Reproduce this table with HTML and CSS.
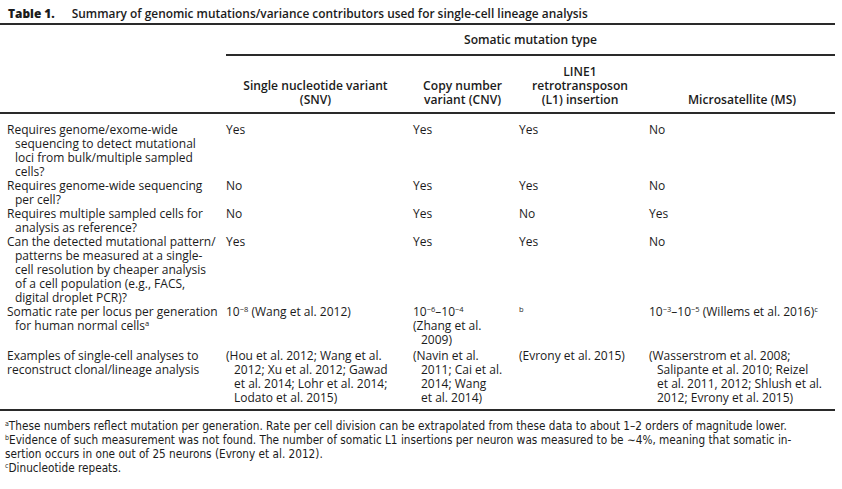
FILE: index.html
```html
<!DOCTYPE html>
<html lang="en">
<head>
<meta charset="utf-8">
<title>Table 1</title>
<link rel="stylesheet" href="styles.css">
</head>
<body>
<div class="page">
  <div class="title"><span class="tnum">Table 1.</span><span class="tcap">Summary of genomic mutations/variance contributors used for single-cell lineage analysis</span></div>
  <table class="tbl">
    <colgroup>
      <col class="c1"><col class="c2"><col class="c3"><col class="c4"><col class="c5">
    </colgroup>
    <thead>
      <tr class="r1">
        <th></th>
        <th colspan="4" class="span">Somatic mutation type</th>
      </tr>
      <tr class="r2">
        <th></th>
        <th class="h2">Single nucleotide variant<br>(SNV)</th>
        <th class="h3">Copy number<br>variant (CNV)</th>
        <th class="h4">LINE1<br>retrotransposon<br>(L1) insertion</th>
        <th class="h5">Microsatellite (MS)</th>
      </tr>
    </thead>
    <tbody>
      <tr class="first">
        <td class="lab">Requires genome/exome-wide<br>sequencing to detect mutational<br>loci from bulk/multiple sampled<br>cells?</td>
        <td>Yes</td><td>Yes</td><td>Yes</td><td>No</td>
      </tr>
      <tr>
        <td class="lab">Requires genome-wide sequencing<br>per cell?</td>
        <td>No</td><td>Yes</td><td>Yes</td><td>No</td>
      </tr>
      <tr>
        <td class="lab">Requires multiple sampled cells for<br>analysis as reference?</td>
        <td>No</td><td>Yes</td><td>No</td><td>Yes</td>
      </tr>
      <tr>
        <td class="lab">Can the detected mutational pattern/<br>patterns be measured at a single-<br>cell resolution by cheaper analysis<br>of a cell population (e.g., FACS,<br>digital droplet PCR)?</td>
        <td>Yes</td><td>Yes</td><td>Yes</td><td>No</td>
      </tr>
      <tr>
        <td class="lab">Somatic rate per locus per generation<br>for human normal cells<sup>a</sup></td>
        <td>10<sup>−8</sup> (Wang et al. 2012)</td>
        <td><div>10<sup>−6</sup>–10<sup>−4</sup></div><div>(Zhang et al.<br>2009)</div></td>
        <td><sup>b</sup></td>
        <td>10<sup>−3</sup>–10<sup>−5</sup> (Willems et al. 2016)<sup>c</sup></td>
      </tr>
      <tr class="last">
        <td class="lab flat">Examples of single-cell analyses to<br>reconstruct clonal/lineage analysis</td>
        <td>(Hou et al. 2012; Wang et al.<br>2012; Xu et al. 2012; Gawad<br>et al. 2014; Lohr et al. 2014;<br>Lodato et al. 2015)</td>
        <td>(Navin et al.<br>2011; Cai et al.<br>2014; Wang<br>et al. 2014)</td>
        <td>(Evrony et al. 2015)</td>
        <td>(Wasserstrom et al. 2008;<br>Salipante et al. 2010; Reizel<br>et al. 2011, 2012; Shlush et al.<br>2012; Evrony et al. 2015)</td>
      </tr>
    </tbody>
  </table>
  <div class="notes">
    <p><sup>a</sup>These numbers reflect mutation per generation. Rate per cell division can be extrapolated from these data to about 1–2 orders of magnitude lower.</p>
    <p><sup>b</sup>Evidence of such measurement was not found. The number of somatic L1 insertions per neuron was measured to be ∼4%, meaning that somatic in-<br>sertion occurs in one out of 25 neurons (Evrony et al. 2012).</p>
    <p><sup>c</sup>Dinucleotide repeats.</p>
  </div>
</div>
</body>
</html>
```
FILE: styles.css
```css
html, body {
  margin: 0;
  padding: 0;
  background: #ffffff;
}

body {
  color: #1b1b1b;
  font-family: "Open Sans", Lato, "Liberation Sans", sans-serif;
  font-size: 12px;
}

.page {
  width: 835px;
}

.title {
  padding: 6px 0 3px 8px;
  line-height: 14px;
  font-size: 11.9px;
  white-space: nowrap;
  border-bottom: 2px solid #2a2a2a;
}

.tnum {
  font-weight: 800;
}

.tcap {
  font-weight: 600;
  margin-left: 17px;
}

.tbl {
  width: 835px;
  table-layout: fixed;
  border-collapse: separate;
  border-spacing: 0;
}

.c1 { width: 226px; }
.c2 { width: 187px; }
.c3 { width: 106px; }
.c4 { width: 130px; }
.c5 { width: 186px; }

.tbl th {
  font-weight: 600;
  font-size: 12.1px;
  line-height: 14px;
  text-align: center;
  white-space: nowrap;
}

.r1 th {
  padding: 8px 0 7px 0;
  vertical-align: top;
}

.r1 .span {
  border-bottom: 2px solid #2a2a2a;
}

.r2 th {
  padding: 9px 8px 5px 0;
  vertical-align: bottom;
  border-bottom: 2px solid #2a2a2a;
}

.r2 .h3 { padding-right: 7px; }
.r2 .h5 { padding-right: 0; }

.tbl td {
  padding: 0 8px 0 8px;
  text-indent: -8px;
  line-height: 14px;
  vertical-align: top;
  white-space: nowrap;
}

.tbl td.lab {
  padding-left: 15px;
  padding-right: 2px;
}

.tbl td.flat {
  padding-left: 7px;
  text-indent: 0;
}

.first td {
  padding-top: 9px;
}

.last td {
  padding-top: 2px;
  padding-bottom: 4px;
  border-bottom: 2px solid #2a2a2a;
}

sup {
  font-size: 7.5px;
  line-height: 0;
  vertical-align: 4px;
}

.notes {
  padding: 8px 0 0 5px;
  font-family: "Liberation Sans Narrow", "DejaVu Sans Condensed", "Liberation Sans", sans-serif;
  font-size: 11.7px;
  line-height: 14px;
  white-space: nowrap;
}

.notes p {
  margin: 0;
}

.notes sup {
  font-size: 7px;
  vertical-align: 4px;
}
```
